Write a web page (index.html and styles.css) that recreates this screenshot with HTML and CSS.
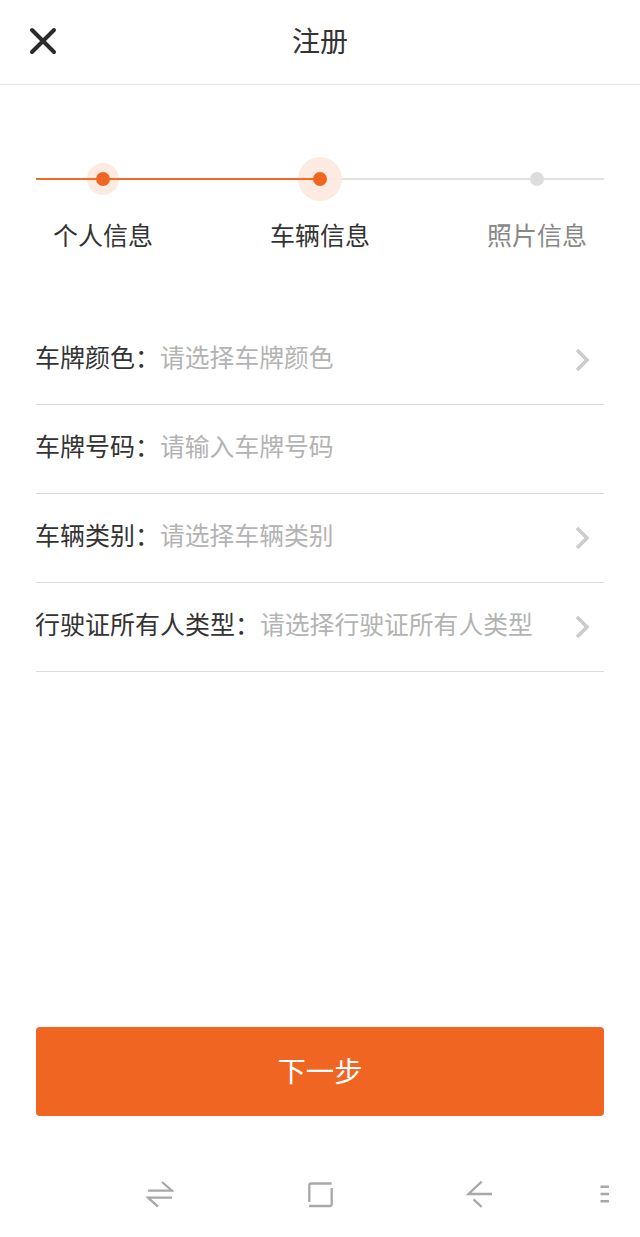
FILE: index.html
```html
<!DOCTYPE html>
<html lang="zh-CN">
<head>
<meta charset="utf-8">
<title>注册</title>
<link rel="stylesheet" href="styles.css">
</head>
<body>
<div class="page">
  <header class="topbar">
    <svg class="close" width="28" height="28" viewBox="0 0 28 28"><path d="M3 3 25 25M25 3 3 25" fill="none" stroke="#2b2b2b" stroke-width="4" stroke-linecap="round"/></svg>
    <h1 class="title">注册</h1>
  </header>
  <section class="steps">
    <div class="track"></div>
    <div class="track-done"></div>
    <div class="step">
      <div class="node"><span class="halo halo-small"></span><span class="dot"></span></div>
      <span class="step-label">个人信息</span>
    </div>
    <div class="step">
      <div class="node"><span class="halo halo-large"></span><span class="dot"></span></div>
      <span class="step-label">车辆信息</span>
    </div>
    <div class="step">
      <div class="node"><span class="dot dot-todo"></span></div>
      <span class="step-label step-label-todo">照片信息</span>
    </div>
  </section>
  <form class="form">
    <div class="row">
      <span class="row-label">车牌颜色：</span><span class="row-value">请选择车牌颜色</span>
      <svg class="chevron" width="14" height="24" viewBox="0 0 14 24"><path d="M2 2 12 12 2 22" fill="none" stroke="#cccccc" stroke-width="3.6"/></svg>
    </div>
    <div class="row">
      <span class="row-label">车牌号码：</span><span class="row-value">请输入车牌号码</span>
    </div>
    <div class="row">
      <span class="row-label">车辆类别：</span><span class="row-value">请选择车辆类别</span>
      <svg class="chevron" width="14" height="24" viewBox="0 0 14 24"><path d="M2 2 12 12 2 22" fill="none" stroke="#cccccc" stroke-width="3.6"/></svg>
    </div>
    <div class="row">
      <span class="row-label">行驶证所有人类型：</span><span class="row-value">请选择行驶证所有人类型</span>
      <svg class="chevron" width="14" height="24" viewBox="0 0 14 24"><path d="M2 2 12 12 2 22" fill="none" stroke="#cccccc" stroke-width="3.6"/></svg>
    </div>
  </form>
  <button class="next" type="button">下一步</button>
  <nav class="sysnav">
    <svg width="28" height="28" viewBox="0 0 28 28"><path d="M2 10.7H26L16 2M26 17.7H2L12 26.7" fill="none" stroke="#a8a8a8" stroke-width="2.3"/></svg>
    <svg width="28" height="28" viewBox="0 0 28 28"><path d="M3.3 22V5.5Q3.3 3.5 5.3 3.5H25.7M25.7 8V24Q25.7 26 23.7 26H3" fill="none" stroke="#a8a8a8" stroke-width="2.3"/></svg>
    <svg width="28" height="28" viewBox="0 0 28 28"><path d="M15.7 1.7 2.5 14H26M7.5 19.3 15.7 27" fill="none" stroke="#a8a8a8" stroke-width="2.3"/></svg>
    <svg class="menu" width="10" height="28" viewBox="0 0 10 28"><path d="M.5 6.7H9M.5 14H9M.5 21.3H9" fill="none" stroke="#a8a8a8" stroke-width="2.6"/></svg>
  </nav>
</div>
</body>
</html>
```
FILE: styles.css
```css
* {
  box-sizing: border-box;
}

html,
body {
  margin: 0;
  padding: 0;
  background: #ffffff;
}

.page {
  width: 640px;
  height: 1237px;
  display: flex;
  flex-direction: column;
  overflow: hidden;
  font-family: "Noto Sans CJK SC", "Noto Sans", sans-serif;
  color: #333333;
}

.topbar {
  height: 85px;
  flex: none;
  display: flex;
  align-items: center;
  justify-content: center;
  position: relative;
  border-bottom: 1px solid #e2e2e2;
}

.close {
  position: absolute;
  left: 29px;
  top: 27px;
}

.title {
  margin: -5px 0 0;
  font-size: 28px;
  font-weight: 400;
  line-height: 40px;
}

.steps {
  position: relative;
  display: flex;
  justify-content: space-between;
  margin: 72px 36px 0;
}

.track,
.track-done {
  position: absolute;
  left: 0;
  top: 21px;
  height: 2px;
}

.track {
  width: 100%;
  background: #e0e0e0;
}

.track-done {
  width: 50%;
  background: #f56a25;
  z-index: 2;
}

.step {
  width: 134px;
  display: flex;
  flex-direction: column;
  align-items: center;
}

.node {
  position: relative;
  width: 44px;
  height: 44px;
  display: flex;
  align-items: center;
  justify-content: center;
}

.halo {
  position: absolute;
  border-radius: 50%;
  background: rgba(253, 233, 222, 0.92);
  z-index: 1;
}

.halo-small {
  width: 32px;
  height: 32px;
  left: 6px;
  top: 6px;
}

.halo-large {
  width: 44px;
  height: 44px;
  left: 0;
  top: 0;
}

.dot {
  position: relative;
  width: 14px;
  height: 14px;
  border-radius: 50%;
  background: #f16522;
  z-index: 3;
}

.dot-todo {
  background: #dddddd;
}

.step-label {
  margin-top: 15px;
  font-size: 25px;
  line-height: 36px;
  white-space: nowrap;
}

.step-label-todo {
  color: #888888;
}

.form {
  margin: 64px 36px 0;
  display: flex;
  flex-direction: column;
}

.row {
  height: 89px;
  display: flex;
  align-items: center;
  border-bottom: 1px solid #dcdcdc;
  padding-bottom: 8px;
  font-size: 25px;
  line-height: 36px;
  white-space: nowrap;
}

.row-label {
  margin-left: -1px;
}

.row-value {
  color: #b3b3b3;
  font-size: 24.8px;
}

.chevron {
  margin-left: auto;
  margin-right: 15px;
  margin-top: 8px;
}

.next {
  display: block;
  flex: none;
  width: 568px;
  height: 89px;
  margin: 355px 36px 0;
  padding: 0 0 3px;
  border: 0;
  border-radius: 4px;
  background: #f16522;
  color: #ffffff;
  font-family: inherit;
  font-size: 28.4px;
  line-height: 40px;
}

.sysnav {
  position: relative;
  margin-top: 64px;
  height: 28px;
  display: flex;
  padding-left: 146px;
  gap: 132px;
}

.sysnav svg {
  flex: none;
}

.sysnav .menu {
  margin-left: -26px;
}
```
